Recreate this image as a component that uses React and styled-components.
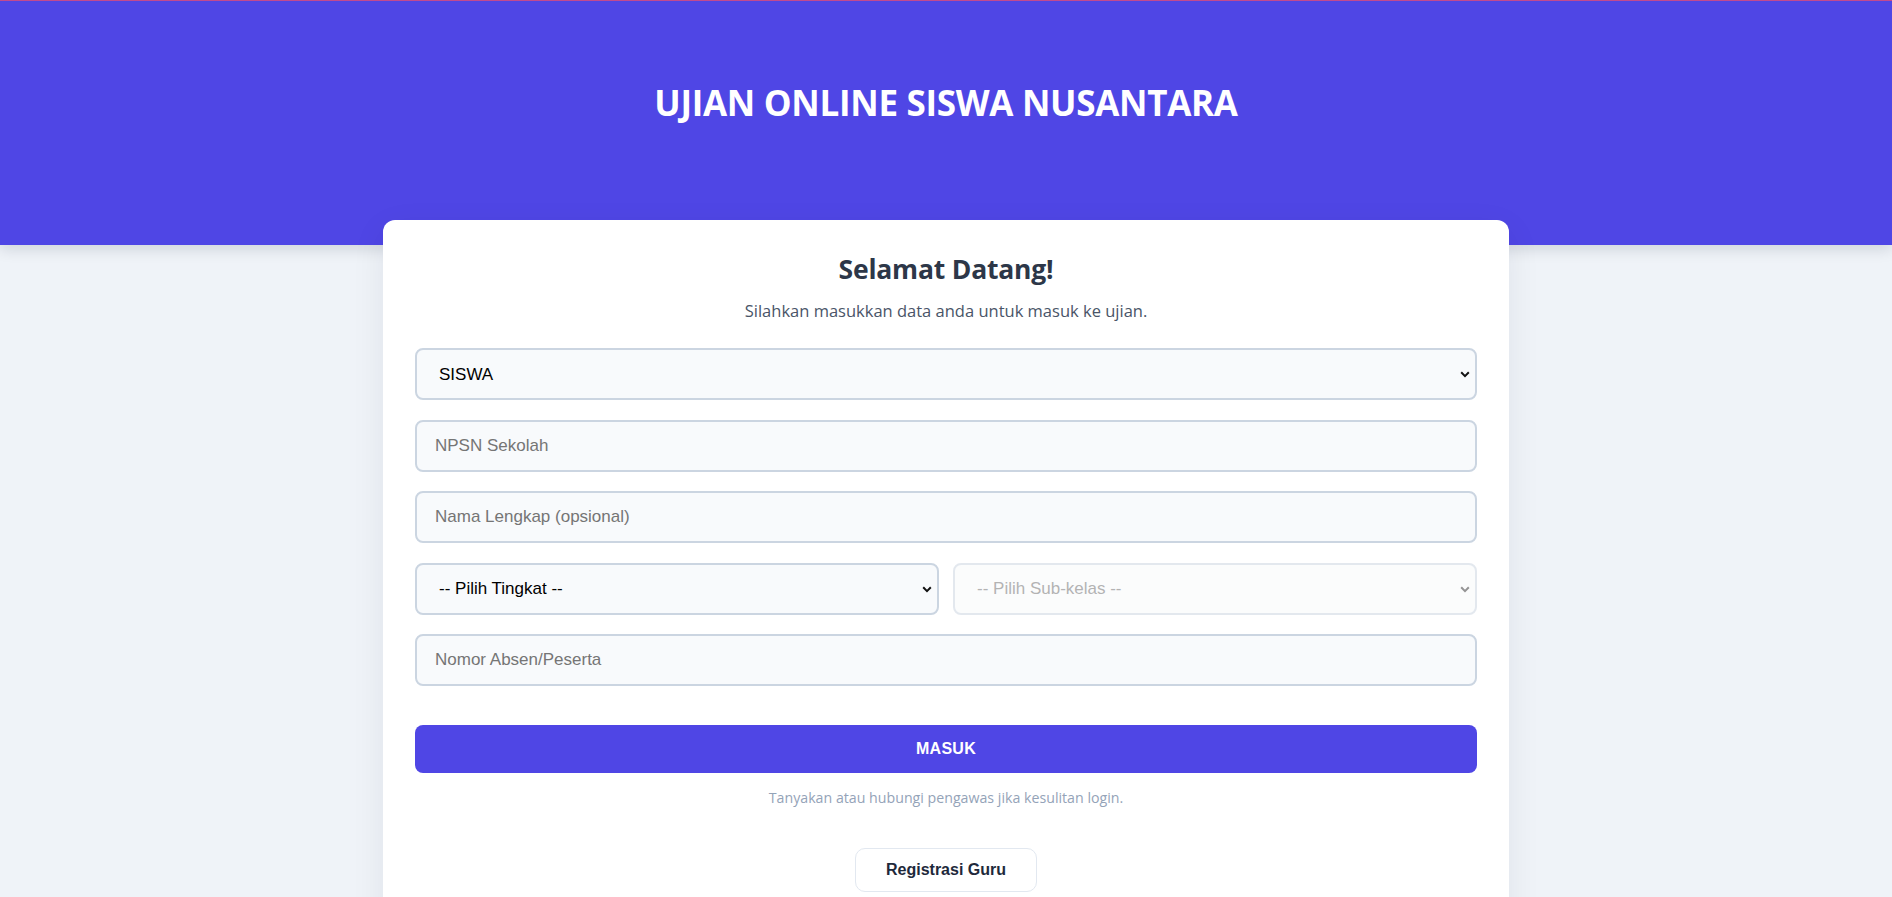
import { useState } from 'react';
import styled, { createGlobalStyle } from 'styled-components';

const primaryColor = '#4f46e5';

const GlobalStyle = createGlobalStyle`
  * {
    box-sizing: border-box;
  }
  body {
    margin: 0;
    background: #eff3f8;
    font-family: 'Segoe UI', 'Open Sans', sans-serif;
    color: #334155;
  }
`;

const Header = styled.header`
  position: relative;
  height: 245px;
  padding-top: 81px;
  background: ${primaryColor};
  border-top: 1px solid #c24a8e;
  box-shadow: 0 4px 14px rgba(15, 23, 42, 0.14);
  text-align: center;
`;

const Title = styled.h1`
  margin: 0;
  color: #ffffff;
  font-size: 35px;
  line-height: 1.2;
  font-weight: 700;
  letter-spacing: -0.3px;
`;

const Card = styled.main`
  position: relative;
  z-index: 1;
  width: 1126px;
  margin: -25px auto 0;
  padding: 34px 32px 40px;
  background: #ffffff;
  border-radius: 12px;
  box-shadow: 0 10px 35px rgba(15, 23, 42, 0.07);
  text-align: center;
`;

const Welcome = styled.h2`
  margin: 0;
  color: #2d3748;
  font-size: 26.5px;
  line-height: 1.2;
  font-weight: 700;
  letter-spacing: -0.2px;
`;

const Subtitle = styled.p`
  margin: 12.5px 0 25px;
  color: #4a5568;
  font-size: 16.5px;
  line-height: 25px;
`;

const FormWrapper = styled.form`
  display: flex;
  flex-direction: column;
  gap: 19.5px;
`;

const FormRow = styled.div`
  display: grid;
  grid-template-columns: 1fr 1fr;
  gap: 14px;
`;

const fieldStyle = `
  width: 100%;
  height: 52px;
  padding: 0 18px;
  border: 2px solid #cbd5e1;
  border-radius: 8px;
  background: #f8fafc;
  font-family: 'Liberation Sans', Arial, sans-serif;
  font-size: 17px;
  color: #000000;
  outline: none;
`;

const Input = styled.input`
  ${fieldStyle}

  &::placeholder {
    color: #757575;
  }
  &:focus {
    border-color: ${primaryColor};
  }
`;

const SelectBox = styled.div`
  position: relative;
  opacity: ${({ disabled }) => (disabled ? 0.74 : 1)};
`;

const Select = styled.select`
  ${fieldStyle}
  appearance: none;
  padding-left: 22px;
  color: ${({ disabled }) => (disabled ? '#6f6f6f' : '#000000')};
`;

const Chevron = styled.svg`
  position: absolute;
  right: 7px;
  top: 50%;
  width: 10px;
  height: 7px;
  margin-top: -3px;
  pointer-events: none;
  color: ${({ disabled }) => (disabled ? '#6f6f6f' : '#111111')};
`;

const SubmitButton = styled.button`
  margin-top: 19px;
  height: 48.5px;
  border: none;
  border-radius: 8px;
  background: ${primaryColor};
  color: #ffffff;
  font-family: 'Liberation Sans', Arial, sans-serif;
  font-size: 16px;
  font-weight: 700;
  letter-spacing: 0.3px;
  cursor: pointer;
`;

const HelpText = styled.p`
  margin: 14px 0 40px;
  color: #94a3b8;
  font-size: 14.2px;
  line-height: 21px;
`;

const SecondaryButton = styled.button`
  padding: 12px 30px;
  border: 1px solid #e2e8f0;
  border-radius: 10px;
  background: #ffffff;
  color: #1e293b;
  font-family: 'Liberation Sans', Arial, sans-serif;
  font-size: 16px;
  font-weight: 700;
  cursor: pointer;
`;

const Dropdown = ({ value, onChange, options, disabled }) => (
  <SelectBox disabled={disabled}>
    <Select value={value} onChange={onChange} disabled={disabled}>
      {options.map((opt) => (
        <option key={opt} value={opt}>
          {opt}
        </option>
      ))}
    </Select>
    <Chevron viewBox="0 0 10 7" disabled={disabled}>
      <path
        d="M1.2 1.3 5 5.1 8.8 1.3"
        fill="none"
        stroke="currentColor"
        strokeWidth="2"
      />
    </Chevron>
  </SelectBox>
);

const App = () => {
  const [role, setRole] = useState('SISWA');
  const [npsn, setNpsn] = useState('');
  const [nama, setNama] = useState('');
  const [tingkat, setTingkat] = useState('-- Pilih Tingkat --');
  const [absen, setAbsen] = useState('');

  const sumbitHandler = (e) => {
    e.preventDefault();
  };

  return (
    <>
      <GlobalStyle />
      <Header>
        <Title>UJIAN ONLINE SISWA NUSANTARA</Title>
      </Header>
      <Card>
        <Welcome>Selamat Datang!</Welcome>
        <Subtitle>Silahkan masukkan data anda untuk masuk ke ujian.</Subtitle>
        <FormWrapper onSubmit={sumbitHandler}>
          <Dropdown
            value={role}
            onChange={(e) => setRole(e.target.value)}
            options={['SISWA', 'GURU']}
          />
          <Input
            value={npsn}
            onChange={(e) => setNpsn(e.target.value)}
            placeholder="NPSN Sekolah"
          />
          <Input
            value={nama}
            onChange={(e) => setNama(e.target.value)}
            placeholder="Nama Lengkap (opsional)"
          />
          <FormRow>
            <Dropdown
              value={tingkat}
              onChange={(e) => setTingkat(e.target.value)}
              options={['-- Pilih Tingkat --', 'Kelas 7', 'Kelas 8', 'Kelas 9']}
            />
            <Dropdown
              value="-- Pilih Sub-kelas --"
              onChange={() => {}}
              options={['-- Pilih Sub-kelas --']}
              disabled
            />
          </FormRow>
          <Input
            value={absen}
            onChange={(e) => setAbsen(e.target.value)}
            placeholder="Nomor Absen/Peserta"
          />
          <SubmitButton type="submit">MASUK</SubmitButton>
        </FormWrapper>
        <HelpText>Tanyakan atau hubungi pengawas jika kesulitan login.</HelpText>
        <SecondaryButton type="button">Registrasi Guru</SecondaryButton>
      </Card>
    </>
  );
};

export default App;
